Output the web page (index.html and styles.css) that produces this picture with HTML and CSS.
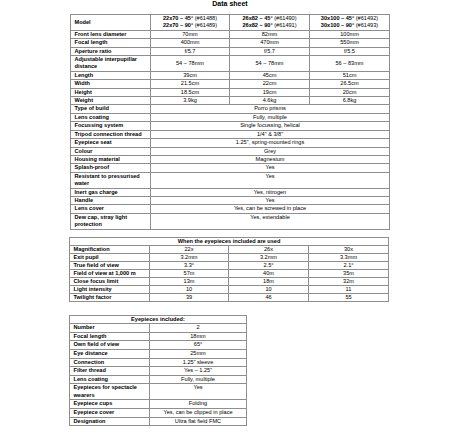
FILE: index.html
```html
<!DOCTYPE html>
<html lang="en">
<head>
<meta charset="utf-8">
<title>Data sheet</title>
<link rel="stylesheet" href="styles.css">
</head>
<body>
<div class="page">
  <h1 class="title">Data sheet</h1>

  <table class="sheet main">
    <colgroup><col class="c-label"><col class="c1"><col class="c2"><col class="c3"></colgroup>
    <tbody>
      <tr class="dbl">
        <th>Model</th>
        <td><b>22x70 – 45°</b> (#61488)<br><b>22x70 – 90°</b> (#61489)</td>
        <td><b>26x82 – 45°</b> (#61490)<br><b>26x82 – 90°</b> (#61491)</td>
        <td><b>30x100 – 45°</b> (#61492)<br><b>30x100 – 90°</b> (#61493)</td>
      </tr>
      <tr><th>Front lens diameter</th><td>70mm</td><td>82mm</td><td>100mm</td></tr>
      <tr><th>Focal length</th><td>400mm</td><td>470mm</td><td>550mm</td></tr>
      <tr><th>Aperture ratio</th><td>f/5.7</td><td>f/5.7</td><td>f/5.5</td></tr>
      <tr><th>Adjustable interpupillar<br>distance</th><td>54 – 78mm</td><td>54 – 78mm</td><td>56 – 83mm</td></tr>
      <tr><th>Length</th><td>39cm</td><td>45cm</td><td>51cm</td></tr>
      <tr><th>Width</th><td>21.5cm</td><td>22cm</td><td>26.5cm</td></tr>
      <tr><th>Height</th><td>18.5cm</td><td>19cm</td><td>20cm</td></tr>
      <tr><th>Weight</th><td>3.9kg</td><td>4.6kg</td><td>6.8kg</td></tr>
      <tr><th>Type of build</th><td colspan="3">Porro prisms</td></tr>
      <tr><th>Lens coating</th><td colspan="3">Fully, multiple</td></tr>
      <tr><th>Focussing system</th><td colspan="3">Single focussing, helical</td></tr>
      <tr><th>Tripod connection thread</th><td colspan="3">1/4” &amp; 3/8”</td></tr>
      <tr><th>Eyepiece seat</th><td colspan="3">1.25”, spring-mounted rings</td></tr>
      <tr><th>Colour</th><td colspan="3">Grey</td></tr>
      <tr><th>Housing material</th><td colspan="3">Magnesium</td></tr>
      <tr><th>Splash-proof</th><td colspan="3">Yes</td></tr>
      <tr><th>Resistant to pressurised<br>water</th><td colspan="3" class="top">Yes</td></tr>
      <tr><th>Inert gas charge</th><td colspan="3">Yes, nitrogen</td></tr>
      <tr><th>Handle</th><td colspan="3">Yes</td></tr>
      <tr><th>Lens cover</th><td colspan="3">Yes, can be screwed in place</td></tr>
      <tr><th>Dew cap, stray light<br>protection</th><td colspan="3" class="top">Yes, extendable</td></tr>
    </tbody>
  </table>

  <table class="sheet use">
    <colgroup><col class="c-label"><col class="c1"><col class="c2"><col class="c3"></colgroup>
    <tbody>
      <tr><th colspan="4" class="head">When the eyepieces included are used</th></tr>
      <tr><th>Magnification</th><td>22x</td><td>26x</td><td>30x</td></tr>
      <tr><th>Exit pupil</th><td>3.2mm</td><td>3.2mm</td><td>3.3mm</td></tr>
      <tr><th>True field of view</th><td>3.3°</td><td>2.5°</td><td>2.1°</td></tr>
      <tr><th>Field of view at 1,000 m</th><td>57m</td><td>40m</td><td>35m</td></tr>
      <tr><th>Close focus limit</th><td>13m</td><td>18m</td><td>32m</td></tr>
      <tr><th>Light intensity</th><td>10</td><td>10</td><td>11</td></tr>
      <tr><th>Twilight factor</th><td>39</td><td>46</td><td>55</td></tr>
    </tbody>
  </table>

  <table class="sheet eyepieces">
    <colgroup><col class="c-label"><col class="c-wide"></colgroup>
    <tbody>
      <tr><th colspan="2" class="head">Eyepieces included:</th></tr>
      <tr><th>Number</th><td>2</td></tr>
      <tr><th>Focal length</th><td>18mm</td></tr>
      <tr><th>Own field of view</th><td>65°</td></tr>
      <tr><th>Eye distance</th><td>25mm</td></tr>
      <tr><th>Connection</th><td>1.25” sleeve</td></tr>
      <tr><th>Filter thread</th><td>Yes – 1.25”</td></tr>
      <tr><th>Lens coating</th><td>Fully, multiple</td></tr>
      <tr><th>Eyepieces for spectacle<br>wearers</th><td class="top">Yes</td></tr>
      <tr><th>Eyepiece cups</th><td>Folding</td></tr>
      <tr><th>Eyepiece cover</th><td>Yes, can be clipped in place</td></tr>
      <tr><th>Designation</th><td>Ultra flat field FMC</td></tr>
    </tbody>
  </table>
</div>
</body>
</html>
```

FILE: styles.css
```css
html, body {
  margin: 0;
  padding: 0;
  background: #ffffff;
}

.page {
  padding: 0 0 0 69px;
  font-family: "Liberation Sans", Arial, sans-serif;
  color: #000000;
}

.title {
  width: 320px;
  margin: 0 0 6px 1px;
  font-size: 7px;
  line-height: 8px;
  font-weight: bold;
  text-align: center;
}

.sheet {
  border-collapse: collapse;
  table-layout: fixed;
  font-size: 5.6px;
}

.sheet th,
.sheet td {
  border: 1px solid #8e8e8e;
  padding: 0 3.5px;
  vertical-align: middle;
  white-space: nowrap;
  overflow: hidden;
}

.sheet th {
  text-align: left;
  font-weight: bold;
}

.sheet td {
  text-align: center;
  font-weight: normal;
}

.sheet th.head {
  text-align: center;
}

.sheet td.top {
  vertical-align: top;
}

.c-label { width: 80px; }
.c1 { width: 79px; }
.c2 { width: 80px; }
.c3 { width: 80px; }
.c-wide { width: 97px; }

.main {
  width: 320px;
  margin-left: 1px;
  line-height: 7.4px;
}

.use {
  width: 320px;
  margin-top: 7.5px;
  line-height: 6.95px;
}

.eyepieces {
  width: 178px;
  margin-top: 13px;
  line-height: 7.58px;
}
```
